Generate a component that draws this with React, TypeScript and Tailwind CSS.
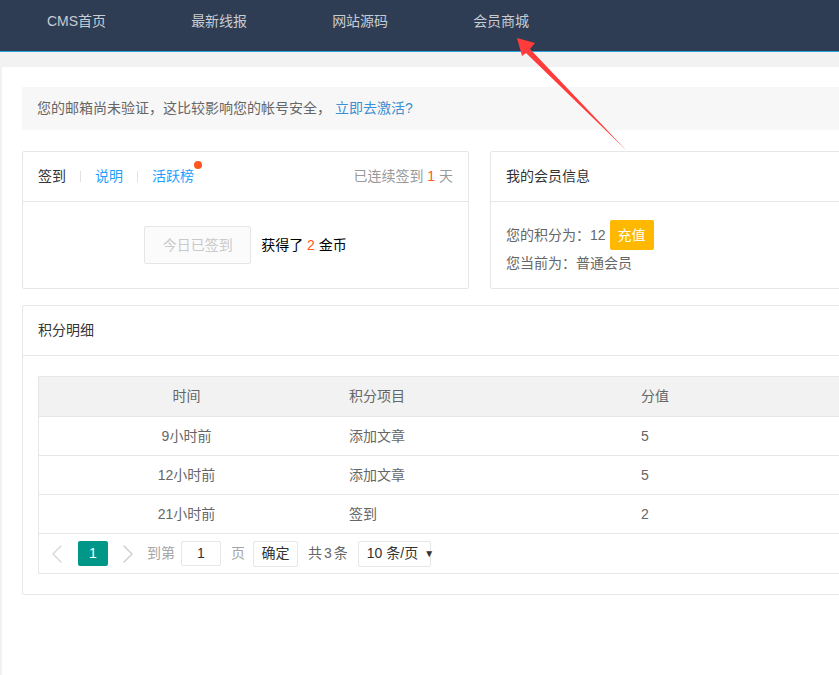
import { ChevronLeft, ChevronRight } from "lucide-react";

const rows = [
  { time: "9小时前", item: "添加文章", score: "5" },
  { time: "12小时前", item: "添加文章", score: "5" },
  { time: "21小时前", item: "签到", score: "2" },
];

const navs = ["CMS首页", "最新线报", "网站源码", "会员商城"];

function Card({ title, children }: { title: React.ReactNode; children: React.ReactNode }) {
  return (
    <div className="border border-[#e6e6e6] rounded-[2px] bg-white">
      <div className="h-[50px] border-b border-[#e6e6e6] px-[15px] flex items-center text-[#333]">
        {title}
      </div>
      {children}
    </div>
  );
}

export default function App() {
  return (
    <div className="relative w-[839px] h-[675px] overflow-hidden bg-[#f2f2f2] text-[14px] font-['Liberation_Sans','Noto_Sans_CJK_SC',sans-serif]">
      {/* top nav */}
      <div className="h-[52px] bg-[#2f3d54] border-b border-[#27a3dd] flex items-start pt-[11px] pl-[47px] gap-[85px]">
        {navs.map((n) => (
          <span key={n} className="leading-[20px] text-[#c8ccd2]">
            {n}
          </span>
        ))}
      </div>

      <div className="mt-[15px] ml-[2px] w-[1000px] h-[700px] bg-white p-[20px]">
        <div className="w-[915px]">
          {/* notice */}
          <div className="h-[43px] bg-[#f7f7f7] px-[15px] flex items-center text-[#666]">
            您的邮箱尚未验证，这比较影响您的帐号安全，
            <span className="ml-[4px] text-[#3b8fd3]">立即去激活?</span>
          </div>

          <div className="grid grid-cols-2 gap-[21px] mt-[21px]">
            <Card
              title={
                <div className="flex items-center w-full">
                  <span>签到</span>
                  <span className="mx-[14px] w-px h-[11px] bg-[#e2e2e2]" />
                  <span className="text-[#1e9fff]">说明</span>
                  <span className="mx-[14px] w-px h-[11px] bg-[#e2e2e2]" />
                  <span className="relative text-[#1e9fff]">
                    活跃榜
                    <span className="absolute -right-[8px] -top-[5px] w-[8px] h-[8px] rounded-full bg-[#ff5722]" />
                  </span>
                  <span className="ml-auto text-[#999]">
                    已连续签到 <span className="text-[#ff5722]">1</span> 天
                  </span>
                </div>
              }
            >
              <div className="h-[86px] flex items-start justify-center pt-[24px]">
                <div className="w-[107px] h-[38px] border border-[#e6e6e6] bg-[#fbfbfb] rounded-[2px] flex items-center justify-center text-[#c9c9c9]">
                  今日已签到
                </div>
                <div className="ml-[10px] h-[38px] flex items-center text-[#000]">
                  获得了&nbsp;<span className="text-[#ff5722]">2</span>&nbsp;金币
                </div>
              </div>
            </Card>

            <Card title={<span>我的会员信息</span>}>
              <div className="h-[86px] px-[15px] pt-[18px] text-[#666]">
                <div className="h-[30px] flex items-center">
                  您的积分为：12
                  <span className="ml-[4px] w-[44px] h-[30px] rounded-[2px] bg-[#ffb800] text-white flex items-center justify-center">
                    充值
                  </span>
                </div>
                <div className="mt-[3px] leading-[20px]">您当前为：普通会员</div>
              </div>
            </Card>
          </div>

          {/* points detail */}
          <div className="mt-[16px]">
            <Card title={<span>积分明细</span>}>
              <div className="px-[15px] pt-[20px] pb-[20px]">
                <div className="border border-[#e6e6e6] text-[#666]">
                  <div className="flex h-[39px] items-center bg-[#f2f2f2] border-b border-[#e6e6e6] box-content">
                    <div className="w-[295px] text-center">时间</div>
                    <div className="w-[292px] px-[15px]">积分项目</div>
                    <div className="flex-1 px-[15px]">分值</div>
                  </div>
                  {rows.map((r) => (
                    <div key={r.time} className="flex h-[39px] items-center border-b border-[#e6e6e6]">
                      <div className="w-[295px] text-center">{r.time}</div>
                      <div className="w-[292px] px-[15px]">{r.item}</div>
                      <div className="flex-1 px-[15px]">{r.score}</div>
                    </div>
                  ))}
                  <div className="h-[39px] flex items-center pl-[2px] whitespace-nowrap">
                    <ChevronLeft className="w-[32px] h-[32px] text-[#d6d6d6]" strokeWidth={1} />
                    <span className="ml-[5px] w-[30px] h-[25px] rounded-[2px] bg-[#009688] text-white flex items-center justify-center">
                      1
                    </span>
                    <ChevronRight className="ml-[4px] w-[32px] h-[32px] text-[#cccccc]" strokeWidth={1} />
                    <span className="ml-[3px] text-[#a6a6a6]">到第</span>
                    <span className="ml-[6px] w-[40px] h-[25px] border border-[#e6e6e6] rounded-[2px] flex items-center justify-center text-[#333]">
                      1
                    </span>
                    <span className="ml-[10px] text-[#a6a6a6]">页</span>
                    <span className="ml-[8px] w-[45px] h-[26px] border border-[#e6e6e6] rounded-[2px] flex items-center justify-center text-[#333]">
                      确定
                    </span>
                    <span className="ml-[10px] text-[#666] flex items-center gap-[2px]">
                      <span>共</span>
                      <span>3</span>
                      <span>条</span>
                    </span>
                    <span className="ml-[10px] w-[73px] h-[26px] border border-[#e6e6e6] rounded-[2px] flex items-center pl-[8px] text-[#333]">
                      10 条/页
                      <span className="ml-[6px] text-[10px]">▼</span>
                    </span>
                  </div>
                </div>
              </div>
            </Card>
          </div>
        </div>
      </div>

      {/* red annotation arrow */}
      <svg className="absolute left-0 top-0 pointer-events-none" width="839" height="675">
        <polygon points="517,38 535,43 530,49 626,150 526,53 522,56" fill="#ff3b3b" />
      </svg>
    </div>
  );
}
